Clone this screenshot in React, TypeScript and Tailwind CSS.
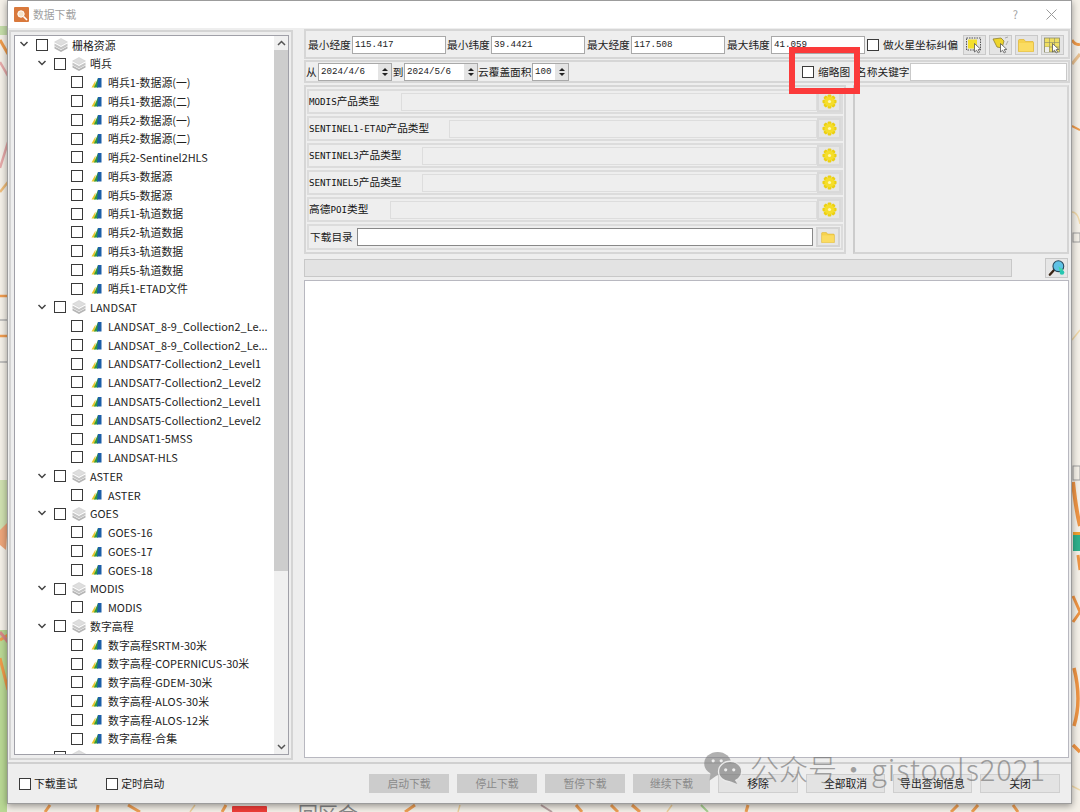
import React from "react";

const CJK = "font-['Noto_Sans_CJK_SC','Noto_Sans',sans-serif]";
const MONO = "font-['Liberation_Mono','Noto_Sans_CJK_SC',monospace]";

function Chevron() {
  return (
    <svg width="10" height="7" viewBox="0 0 10 7" className="shrink-0">
      <path d="M1.5 1 L5 4.5 L8.5 1" fill="none" stroke="#444" strokeWidth="1.5" />
    </svg>
  );
}

function Layers() {
  return (
    <svg width="16" height="16" viewBox="0 0 16 16" className="shrink-0">
      <path d="M1.5 9.5 L8 13 L14.5 9.5 L14.5 11.5 L8 15 L1.5 11.5Z" fill="#b5b5b5" />
      <path d="M1.5 6.5 L8 10 L14.5 6.5 L14.5 9 L8 12.5 L1.5 9Z" fill="#c6c6c6" />
      <path d="M1.5 5 L8 1.5 L14.5 5 L8 8.5Z" fill="#dedede" stroke="#c8c8c8" strokeWidth="0.5" />
    </svg>
  );
}

function Raster() {
  return (
    <svg width="11" height="11" viewBox="0 0 11 11" className="shrink-0">
      <path d="M0.5 10.5 L4.5 3.5 L4.5 10.5Z" fill="#e8c72c" />
      <path d="M3 10.5 L7 1 L7 10.5Z" fill="#2f9a3e" />
      <path d="M6 10.5 L7 1 L10.5 1 L10.5 10.5Z" fill="#1c5fa8" />
    </svg>
  );
}

function Gear() {
  const teeth = [0, 45, 90, 135];
  return (
    <svg width="15" height="15" viewBox="0 0 16 16">
      {teeth.map((t) => (
        <rect key={t} x="6" y="0.5" width="4" height="15" rx="1.2" fill="#ecd012" transform={`rotate(${t} 8 8)`} />
      ))}
      <circle cx="8" cy="8" r="5.3" fill="#f5de2a" />
      <circle cx="8" cy="8" r="1.7" fill="#fff6b0" />
    </svg>
  );
}

function Folder({ w = 16 }: { w?: number }) {
  return (
    <svg width={w} height={Math.round((w * 13) / 16)} viewBox="0 0 16 13">
      <path d="M0.5 1.5 Q0.5 0.5 1.5 0.5 L6 0.5 L7.5 2.5 L15 2.5 L15.5 3.5 L15.5 12.5 L0.5 12.5Z" fill="#f6d24e" stroke="#dfb52f" strokeWidth="0.7" />
      <rect x="1" y="4" width="14" height="8.3" fill="#fbdc62" />
    </svg>
  );
}

function Cursor() {
  return <path d="M9.5 7.5 L9.5 16 L11.6 14.2 L13.2 17 L14.6 16.2 L13.2 13.6 L15.8 13.4Z" fill="#fff" stroke="#555" strokeWidth="0.8" />;
}

function ToolA() {
  return (
    <svg width="18" height="18" viewBox="0 0 18 18">
      <rect x="1.5" y="2" width="14" height="12" fill="none" stroke="#555" strokeWidth="1" strokeDasharray="1.5 1" />
      <rect x="3" y="3.5" width="9" height="9" fill="#f4e02c" />
      <Cursor />
    </svg>
  );
}
function ToolB() {
  return (
    <svg width="18" height="18" viewBox="0 0 18 18">
      <path d="M2 3 L10 2 L13 5 L11 12 L6 11Z" fill="#eed52c" stroke="#8e8030" strokeWidth="0.8" />
      <path d="M14 2 L17 1 M15 9 L17 5" stroke="#999" strokeWidth="0.8" />
      <Cursor />
    </svg>
  );
}
function ToolD() {
  return (
    <svg width="18" height="18" viewBox="0 0 18 18">
      <rect x="1.5" y="2" width="15" height="14" fill="#f0df62" stroke="#8a8a6a" strokeWidth="0.8" />
      <path d="M1.5 6.5 H16.5 M1.5 11 H16.5 M6.5 2 V16 M11.5 2 V16" stroke="#8a8a6a" strokeWidth="0.6" />
      <path d="M2 11 H6 V16 H2Z" fill="#eeeeee" />
      <Cursor />
    </svg>
  );
}
function Magnifier() {
  return (
    <svg width="18" height="18" viewBox="0 0 20 20">
      <path d="M7 12 L2 17.5" stroke="#3a2414" strokeWidth="2.6" strokeLinecap="round" />
      <circle cx="11.5" cy="8" r="6" fill="#5fc2e6" stroke="#28485c" strokeWidth="1.2" />
      <path d="M11.5 8 L17 12 A6 6 0 0 1 13 14Z" fill="#3dd6a8" />
      <circle cx="15.5" cy="15" r="2.6" fill="#26c6b0" />
    </svg>
  );
}

function Check({ className = "" }: { className?: string }) {
  return <span className={`block h-[12px] w-[12px] shrink-0 border border-[#3a3a3a] bg-white ${className}`} />;
}

type Row = { level: 0 | 1 | 2; label: string };
const tree: Row[] = [
  { level: 0, label: "栅格资源" },
  { level: 1, label: "哨兵" },
  ...[
    "哨兵1-数据源(一)", "哨兵1-数据源(二)", "哨兵2-数据源(一)", "哨兵2-数据源(二)", "哨兵2-Sentinel2HLS",
    "哨兵3-数据源", "哨兵5-数据源", "哨兵1-轨道数据", "哨兵2-轨道数据", "哨兵3-轨道数据", "哨兵5-轨道数据", "哨兵1-ETAD文件",
  ].map((label) => ({ level: 2 as const, label })),
  { level: 1, label: "LANDSAT" },
  ...[
    "LANDSAT_8-9_Collection2_Le...", "LANDSAT_8-9_Collection2_Le...", "LANDSAT7-Collection2_Level1", "LANDSAT7-Collection2_Level2",
    "LANDSAT5-Collection2_Level1", "LANDSAT5-Collection2_Level2", "LANDSAT1-5MSS", "LANDSAT-HLS",
  ].map((label) => ({ level: 2 as const, label })),
  { level: 1, label: "ASTER" },
  { level: 2, label: "ASTER" },
  { level: 1, label: "GOES" },
  { level: 2, label: "GOES-16" },
  { level: 2, label: "GOES-17" },
  { level: 2, label: "GOES-18" },
  { level: 1, label: "MODIS" },
  { level: 2, label: "MODIS" },
  { level: 1, label: "数字高程" },
  ...[
    "数字高程SRTM-30米", "数字高程-COPERNICUS-30米", "数字高程-GDEM-30米", "数字高程-ALOS-30米", "数字高程-ALOS-12米", "数字高程-合集",
  ].map((label) => ({ level: 2 as const, label })),
  { level: 1, label: "" },
];

function TreeRow({ r }: { r: Row }) {
  if (r.level === 2) {
    return (
      <div className="flex h-[18.75px] shrink-0 items-center pl-[56px]">
        <Check />
        <span className="ml-[8px]"><Raster /></span>
        <span className="ml-[6px] whitespace-nowrap text-[10.9px] text-[#222222]">{r.label}</span>
      </div>
    );
  }
  return (
    <div className={`flex h-[18.75px] shrink-0 items-center ${r.level === 0 ? "pl-[4px]" : "pl-[22px]"}`}>
      <Chevron />
      <Check className="ml-[7px]" />
      <span className="ml-[5px]"><Layers /></span>
      <span className="ml-[3px] whitespace-nowrap text-[10.9px] text-[#222222]">{r.label}</span>
    </div>
  );
}

function Field({ label, value }: { label: string; value: string }) {
  return (
    <>
      <span className="w-[44px] shrink-0 whitespace-nowrap text-[10.7px]">{label}</span>
      <span className={`${MONO} flex h-[18px] w-[94px] shrink-0 items-center border border-[#a9a9a9] bg-white pl-[2px] text-[9.2px] text-[#222222]`}>{value}</span>
    </>
  );
}

function Spin({ value, w }: { value: string; w: string }) {
  return (
    <span className={`${w} ${MONO} flex h-[18px] shrink-0 items-center justify-between border border-[#a9a9a9] bg-white pl-[2px] text-[9.2px] text-[#222222]`}>
      {value}
      <span className="flex h-[16px] w-[13px] flex-col items-center justify-center gap-[2px] bg-[#e4e4e4]">
        <span className="h-0 w-0 border-x-[3px] border-b-[3px] border-x-transparent border-b-[#222222]" />
        <span className="h-0 w-0 border-x-[3px] border-t-[3px] border-x-transparent border-t-[#222222]" />
      </span>
    </span>
  );
}

function TypeRow({ prefix = "", name, cjk, fieldLeft }: { prefix?: string; name: string; cjk: string; fieldLeft: string }) {
  return (
    <div className="flex h-[25px] items-center border-2 border-[#dcdcdc]">
      <span className={`${fieldLeft} shrink-0 whitespace-nowrap text-[10.7px] text-[#111111]`}>
        {prefix}
        <span className="font-['DejaVu_Sans_Mono',monospace] text-[9.2px]">{name}</span>
        <span className="font-['Noto_Sans_CJK_SC',sans-serif]">{cjk}</span>
      </span>
      <span className="h-[18px] flex-1 border border-[#dddddd] bg-[#eeeeee]" />
      <span className="flex h-[21px] w-[24px] shrink-0 items-center justify-center border-2 border-[#d9d9d9] bg-[#e6e6e6]">
        <Gear />
      </span>
    </div>
  );
}

function ToolBtn({ children }: { children: React.ReactNode }) {
  return <span className="flex h-[20px] w-[23px] items-center justify-center border border-[#c9c9c9] bg-[#e4e4e4]">{children}</span>;
}

function FootBtn({ label, disabled, w = "w-[80px]" }: { label: string; disabled?: boolean; w?: string }) {
  return (
    <span className={`${w} flex h-[19px] items-center justify-center border text-[10.8px] ${disabled ? "border-[#cccccc] bg-[#cccccc] text-[#8a8a8a]" : "border-[#cfcfcf] bg-[#e3e3e3] text-[#222222]"}`}>
      {label}
    </span>
  );
}

function MapBackdrop() {
  return (
    <svg className="absolute inset-0" width="1080" height="812" viewBox="0 0 1080 812">
      <rect width="1080" height="812" fill="#f4f0e8" />
      {/* left strip */}
      <rect x="0" y="26" width="8" height="9" fill="#c4dca8" />
      <rect x="0" y="480" width="7" height="50" fill="#cfe0b0" />
      <rect x="0" y="630" width="7" height="182" fill="#b9d894" />
      <path d="M0 40 L8 54" stroke="#ee9a4a" strokeWidth="3" fill="none" />
      <path d="M0 62 L8 76 M8 142 L0 168" stroke="#e5a8a8" strokeWidth="2.5" fill="none" />
      <path d="M0 192 L8 182" stroke="#eebc7a" strokeWidth="2.5" fill="none" />
      <path d="M0 296 H8 M0 336 H8" stroke="#ef9c50" strokeWidth="2.5" fill="none" />
      <path d="M0 320 H8 M0 362 H8" stroke="#b0b0b0" strokeWidth="1.5" fill="none" />
      <path d="M0 530 L8 522 L6 550 L0 545Z" fill="#eca57a" />
      <path d="M0 658 L8 690 M0 640 L8 635" stroke="#ee9a4a" strokeWidth="3" fill="none" />
      <path d="M0 632 L8 642" stroke="#d88888" strokeWidth="3" fill="none" />
      {/* right strip */}
      <path d="M1072 40 Q1076 46 1080 44" stroke="#ee9a4a" strokeWidth="3" fill="none" />
      <path d="M1072 64 L1080 54" stroke="#e8c090" strokeWidth="3" fill="none" />
      <path d="M1072 126 L1080 130" stroke="#ee9a4a" strokeWidth="2" fill="none" />
      <path d="M1072 212 Q1078 212 1080 224 M1072 340 L1080 330" stroke="#f0d8a8" strokeWidth="1.5" fill="none" />
      <rect x="1073" y="233" width="7" height="9" fill="none" stroke="#a0a0a0" />
      <rect x="1073" y="466" width="7" height="14" fill="none" stroke="#a0a0a0" />
      <path d="M1073 482 Q1076 510 1080 526" stroke="#ee9444" strokeWidth="4" fill="none" />
      <rect x="1073" y="532" width="7" height="3" fill="#f0a030" />
      <rect x="1073" y="535" width="7" height="16" fill="#2fb08c" />
      <path d="M1078 555 L1080 570 M1073 596 L1080 612 M1073 622 L1080 612" stroke="#ee9444" strokeWidth="3" fill="none" />
      <path d="M1074 668 Q1082 700 1074 726 M1073 745 L1080 752" stroke="#ee9444" strokeWidth="3.5" fill="none" />
      <path d="M1072 786 L1080 790" stroke="#f0d8a8" strokeWidth="1.5" fill="none" />
      {/* bottom strip */}
      <path d="M45 812 L50 805 M97 812 L98 805 M128 805 L140 812 M222 812 L226 805 M405 812 L415 805 M576 805 L582 812 M611 805 L618 812 M632 805 L640 812 M746 812 L748 805 M951 812 L958 805 M972 812 L978 805 M1013 805 L1018 812" stroke="#ee9f55" strokeWidth="3" fill="none" />
      <path d="M190 812 L195 805 M458 812 L460 805 M667 812 L672 805" stroke="#eecf9a" strokeWidth="1.5" fill="none" />
      <path d="M541 805 L552 812" stroke="#b8a0a0" strokeWidth="2" fill="none" />
      <path d="M701 805 L708 812" stroke="#a8d090" strokeWidth="2" fill="none" />
      <rect x="232" y="806" width="35" height="8" rx="1" fill="#ef3d38" />
      <text x="298" y="822" fontSize="20" fill="#888888" fontFamily="'Noto Sans CJK SC',sans-serif">回区会</text>
    </svg>
  );
}

export default function App() {
  return (
    <div className={`relative h-[812px] w-[1080px] overflow-hidden ${CJK}`}>
      <MapBackdrop />
      <div className="relative ml-[7px] flex h-[804px] w-[1065px] flex-col border border-[#9c9c9c] bg-[#eeeeee] shadow-[0_2px_7px_rgba(0,0,0,0.4)]">
        {/* title bar */}
        <div className="flex h-[27px] shrink-0 items-center bg-white pl-[6px] pr-[14px]">
          <span className="flex h-[15px] w-[15px] items-center justify-center rounded-[1px] bg-[#d9793c]">
            <svg width="12" height="12" viewBox="0 0 12 12">
              <circle cx="5" cy="5" r="3.2" fill="#f6e3c8" stroke="#fff" strokeWidth="1" />
              <path d="M7.5 7.5 L11 11" stroke="#fff" strokeWidth="1.6" />
            </svg>
          </span>
          <span className="ml-[4px] text-[10.8px] text-[#a0a0a0]">数据下载</span>
          <span className="ml-auto text-[11px] text-[#a0a0a0]">?</span>
          <svg width="11" height="11" viewBox="0 0 11 11" className="ml-[28px]">
            <path d="M0.5 0.5 L10.5 10.5 M10.5 0.5 L0.5 10.5" stroke="#9a9a9a" strokeWidth="1" />
          </svg>
        </div>

        {/* body */}
        <div className="flex min-h-0 flex-1 gap-[11px] pl-[1px] pr-[1px] pt-[2px]">
          {/* tree */}
          <div className="h-[730px] w-[284px] shrink-0 border-2 border-[#d4d4d4] py-[3px] pl-[3px] pr-[2px]">
            <div className="flex h-full border border-[#a0a0a8] bg-white">
              <div className="flex min-w-0 flex-1 flex-col overflow-hidden">
                <div className="-mt-[0.5px] flex flex-col">
                  {tree.map((r, i) => <TreeRow key={i} r={r} />)}
                </div>
              </div>
              <div className="flex w-[14px] shrink-0 flex-col bg-[#f0f0f0]">
                <span className="flex h-[14px] items-center justify-center">
                  <svg width="9" height="6" viewBox="0 0 9 6"><path d="M1 5 L4.5 1.5 L8 5" fill="none" stroke="#555" strokeWidth="1.5" /></svg>
                </span>
                <span className="h-[521px] bg-[#cdcdcd]" />
                <span className="flex flex-1 items-end justify-center pb-[4px]">
                  <svg width="9" height="6" viewBox="0 0 9 6"><path d="M1 1 L4.5 4.5 L8 1" fill="none" stroke="#555" strokeWidth="1.5" /></svg>
                </span>
              </div>
            </div>
          </div>

          {/* right column */}
          <div className="-mt-[1px] flex min-w-0 flex-1 flex-col">
            {/* row 1 */}
            <div className="flex h-[30px] shrink-0 items-center border-2 border-[#d6d6d6] pl-[2px] pt-[2px] text-[#222222]">
              <Field label="最小经度" value="115.417" />
              <span className="w-[1px]" />
              <Field label="最小纬度" value="39.4421" />
              <span className="w-[2px]" />
              <Field label="最大经度" value="117.508" />
              <span className="w-[2px]" />
              <Field label="最大纬度" value="41.059" />
              <Check className="ml-[2px]" />
              <span className="ml-[4px] whitespace-nowrap text-[10.7px]">做火星坐标纠偏</span>
              <span className="ml-[5px] flex gap-[3px]">
                <ToolBtn><ToolA /></ToolBtn>
                <ToolBtn><ToolB /></ToolBtn>
                <ToolBtn><Folder /></ToolBtn>
                <ToolBtn><ToolD /></ToolBtn>
              </span>
            </div>

            {/* row 2 */}
            <div className="mt-[1px] flex h-[23px] shrink-0 items-center border-2 border-[#d6d6d6] pr-[1px] pt-[1px] text-[10.7px] text-[#222222]">
              <span className="w-[12px]">从</span>
              <Spin value="2024/4/6" w="w-[74px]" />
              <span className="w-[12px] text-center">到</span>
              <Spin value="2024/5/6" w="w-[74px]" />
              <span className="w-[54px] whitespace-nowrap">云覆盖面积</span>
              <Spin value="100" w="w-[37px]" />
              <Check className="ml-[233px]" />
              <span className="ml-[4px] whitespace-nowrap">缩略图</span>
              <span className="ml-[6px] whitespace-nowrap">名称关键字</span>
              <span className="h-[18px] flex-1 border border-[#c9c9c9] bg-white" />
            </div>

            {/* product types + side panel */}
            <div className="mt-[2px] flex h-[169px] shrink-0 gap-[7px]">
              <div className="flex w-[542px] flex-col gap-[2px] border-2 border-[#d6d6d6] px-[1px] pt-[2px]">
                <TypeRow name="MODIS" cjk="产品类型" fieldLeft="w-[92px]" />
                <TypeRow name="SENTINEL1-ETAD" cjk="产品类型" fieldLeft="w-[140px]" />
                <TypeRow name="SENTINEL3" cjk="产品类型" fieldLeft="w-[113px]" />
                <TypeRow name="SENTINEL5" cjk="产品类型" fieldLeft="w-[113px]" />
                <TypeRow prefix="高德" name="POI" cjk="类型" fieldLeft="w-[81px]" />
                <div className="flex h-[26px] items-center border-2 border-[#dcdcdc]">
                  <span className="ml-[1px] w-[47px] shrink-0 whitespace-nowrap text-[10.7px] text-[#222222]">下载目录</span>
                  <span className="h-[18px] w-[456px] border border-[#888888] bg-white" />
                  <span className="ml-[3px] flex h-[20px] w-[24px] items-center justify-center border-2 border-[#d4d4d4] bg-[#e6e6e6]">
                    <Folder w={14} />
                  </span>
                </div>
              </div>
              <div className="mr-[1px] flex-1 border-2 border-b-[#d4d4d4] border-l-[#cccccc] border-r-[#d4d4d4] border-t-[#dddddd]" />
            </div>

            {/* progress */}
            <div className="mt-[4px] flex h-[20px] shrink-0 items-center">
              <span className="h-[18px] w-[708px] border border-[#c8c8c8] bg-[#e3e3e3]" />
              <span className="ml-[33px] flex h-[20px] w-[23px] items-center justify-center border border-[#c8c8c8] bg-[#e6e6e6]">
                <Magnifier />
              </span>
            </div>

            {/* results */}
            <div className="mr-[1px] mt-[2px] h-[478px] shrink-0 border border-[#b8b8c0] bg-white" />
          </div>
        </div>

        {/* footer */}
        <div className="flex h-[41px] shrink-0 items-center border-t-2 border-[#d0d0d0] pl-[11px] pr-[11px] text-[10.8px] text-[#222222]">
          <Check />
          <span className="ml-[3px]">下载重试</span>
          <Check className="ml-[29px]" />
          <span className="ml-[3px]">定时启动</span>
          <span className="ml-auto flex gap-[8px]">
            <FootBtn label="启动下载" disabled />
            <FootBtn label="停止下载" disabled />
            <FootBtn label="暂停下载" disabled />
            <FootBtn label="继续下载" disabled w="w-[77px]" />
            <FootBtn label="移除" w="w-[80px]" />
            <FootBtn label="全部取消" w="w-[79px]" />
            <FootBtn label="导出查询信息" w="w-[79px]" />
            <FootBtn label="关闭" w="w-[80px]" />
          </span>
        </div>
      </div>

      {/* red annotation */}
      <div className="absolute left-[789px] top-[47px] h-[47px] w-[71px] border-[6px] border-[#fb3a3a]" />

      {/* watermark */}
      <div className="pointer-events-none absolute left-[703px] top-[751px] flex items-center text-[#6a6a6a] opacity-60">
        <svg width="40" height="34" viewBox="0 0 44 38">
          <ellipse cx="16" cy="14" rx="15" ry="13" fill="#7c7c7c" />
          <path d="M8 24 L7 33 L17 26Z" fill="#7c7c7c" />
          <ellipse cx="30" cy="23" rx="13" ry="11.5" fill="#6e6e6e" stroke="#eeeeee" strokeWidth="1.5" />
          <path d="M35 32 L38 37 L28 33Z" fill="#6e6e6e" />
          <circle cx="25" cy="21" r="1.8" fill="#eeeeee" />
          <circle cx="34" cy="21" r="1.8" fill="#eeeeee" />
          <circle cx="11" cy="11" r="1.8" fill="#eeeeee" />
          <circle cx="20" cy="11" r="1.8" fill="#eeeeee" />
        </svg>
        <span className="ml-[7px] whitespace-nowrap text-[29px] font-light leading-none">公众号</span>
        <span className="ml-[2px] whitespace-nowrap text-[29px] font-light leading-none">·</span>
        <span className="ml-[3px] whitespace-nowrap text-[29px] font-light leading-none tracking-[1px]">gistools2021</span>
      </div>
    </div>
  );
}
